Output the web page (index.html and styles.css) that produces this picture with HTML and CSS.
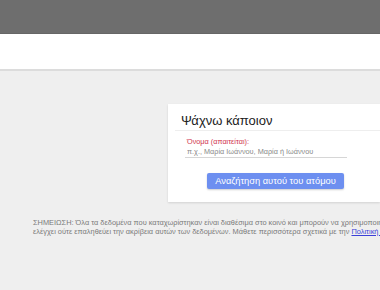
FILE: index.html
```html
<!DOCTYPE html>
<html lang="el">
<head>
    <meta charset="UTF-8">
    <meta name="viewport" content="width=device-width, initial-scale=1.0">
    <title>Ψάχνω κάποιον</title>
    <link rel="stylesheet" href="styles.css">
</head>
<body>

<div class="topbar"></div>
<div class="subbar"></div>

<div class="content">
    <div class="card">
        <h2 class="card-title">Ψάχνω κάποιον</h2>
        <div class="field">
            <label class="field-label" for="name">Όνομα (απαιτείται):</label>
            <input class="field-input" type="text" id="name" placeholder="π.χ., Μαρία Ιωάννου, Μαρία ή Ιωάννου">
        </div>
        <div class="actions">
            <button class="search-button">Αναζήτηση αυτού του ατόμου</button>
        </div>
    </div>

    <p class="note">ΣΗΜΕΙΩΣΗ: Όλα τα δεδομένα που καταχωρίστηκαν είναι διαθέσιμα στο κοινό και μπορούν να χρησιμοποιηθούν από οποιονδήποτε. Η υπηρεσία δεν<br>ελέγχει ούτε επαληθεύει την ακρίβεια αυτών των δεδομένων. Μάθετε περισσότερα σχετικά με την <a href="#">Πολιτική απορρήτου</a>.</p>
</div>

</body>
</html>
```

FILE: styles.css
```css
body {
    margin: 0;
    background-color: #efefef;
    font-family: "Liberation Sans", Arial, sans-serif;
    overflow: hidden;
}

.topbar {
    height: 33px;
    background-color: #6e6e6e;
    border-bottom: 1px solid #666666;
}

.subbar {
    height: 35px;
    background-color: #ffffff;
    border-bottom: 2px solid #dcdcdc;
}

.content {
    padding-top: 33px;
}

.card {
    margin-left: 168px;
    background-color: #ffffff;
    padding: 9px 0 13px 7px;
    box-shadow: 0 1px 2px rgba(0,0,0,.12);
}

.card-title {
    margin: 0;
    padding: 0 0 1px 6px;
    font-size: 13px;
    line-height: 16px;
    font-weight: normal;
    color: #222222;
    border-bottom: 1px solid #eeeeee;
}

.field {
    display: flex;
    flex-direction: column;
    width: 162px;
    margin: 7px 0 0 10px;
}

.field-label {
    padding-left: 2px;
    font-size: 7.3px;
    line-height: 8px;
    color: #d0344e;
}

.field-input {
    border: 0;
    border-bottom: 1px solid #d6d6d6;
    padding: 1px 0 1px 2px;
    font-family: inherit;
    font-size: 7.3px;
    line-height: 9px;
    outline: 0;
    background: transparent;
}

.field-input::placeholder {
    color: #8a8a8a;
}

.actions {
    margin: 15px 0 0 32px;
}

.search-button {
    display: block;
    width: 137px;
    height: 16px;
    border: 0;
    border-radius: 2px;
    background-color: #6d8ff0;
    color: #ffffff;
    font-family: inherit;
    font-size: 9.3px;
    padding: 0;
    box-shadow: 0 1px 2px rgba(0,0,0,.2);
}

.note {
    margin: 16px 0 0 33px;
    font-size: 7.4px;
    line-height: 9px;
    color: #7a7a7a;
    white-space: nowrap;
}

.note a {
    color: #3b3fd8;
}
```
